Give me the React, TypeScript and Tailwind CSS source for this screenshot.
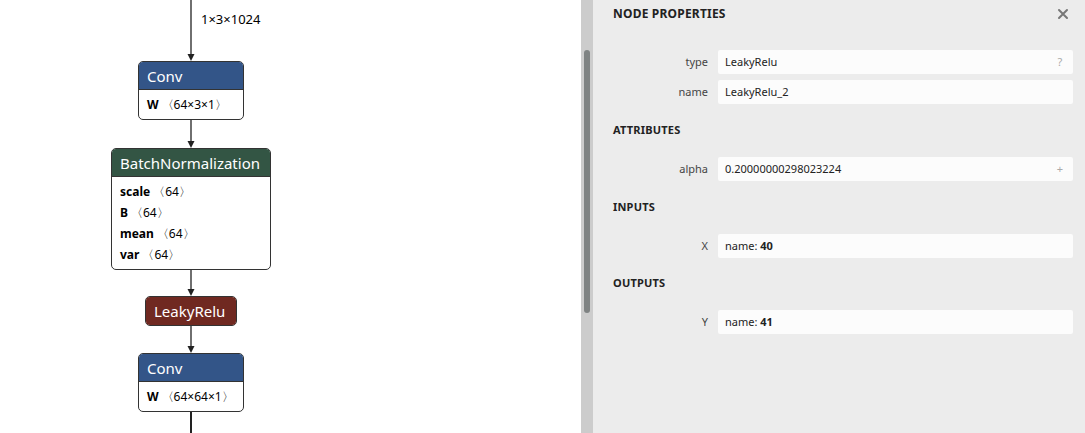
import React from "react";

const font = { fontFamily: '"Noto Sans", "Open Sans", sans-serif' };

function Edge({ h, label }: { h: number; label?: string }) {
  return (
    <div className="relative w-[12px] shrink-0" style={{ height: h }}>
      <svg width="12" height={h} className="block">
        <line x1="6" y1="0" x2="6" y2={h - 4} stroke="#222" strokeWidth="1.3" />
        <polygon points={`2.5,${h - 7} 9.5,${h - 7} 6,${h}`} fill="#222" />
      </svg>
      {label && (
        <span className="absolute left-[16px] top-[10px] text-[13px] text-black whitespace-nowrap">{label}</span>
      )}
    </div>
  );
}

function Attr({ name, shape }: { name: string; shape: string }) {
  return (
    <div className="h-[21px] leading-[21px] text-[12px] text-black whitespace-nowrap">
      <span className="font-bold">{name}</span>
      <span className="ml-[3px]">〈{shape}〉</span>
    </div>
  );
}

function Node({
  title,
  color,
  width,
  attrs,
}: {
  title: string;
  color: string;
  width?: string;
  attrs?: { name: string; shape: string }[];
}) {
  return (
    <div className={`border border-[#333] rounded-[5px] overflow-hidden bg-white shrink-0 ${width ?? ""}`}>
      <div
        className={`${color} h-[28px] leading-[28px] px-[8px] text-[15px] text-white whitespace-nowrap ${attrs ? "border-b border-[#333]" : ""}`}
      >
        {title}
      </div>
      {attrs && (
        <div className="pl-[8px] pt-[4px] pb-[4px]">
          {attrs.map((a) => (
            <Attr key={a.name} name={a.name} shape={a.shape} />
          ))}
        </div>
      )}
    </div>
  );
}

function Row({ label, children, icon }: { label: string; children: React.ReactNode; icon?: string }) {
  return (
    <div className="flex items-center">
      <div className="w-[95px] text-right text-[11px] text-[#444]">{label}</div>
      <div className="ml-[10px] flex-1 h-[24px] bg-[#fcfcfc] rounded-[2px] flex items-center px-[7px] text-[11px] text-[#222]">
        <span className="flex-1 truncate">{children}</span>
        {icon && <span className="text-[#aaa] text-[11px] w-[12px] text-center">{icon}</span>}
      </div>
    </div>
  );
}

function Section({ title }: { title: string }) {
  return <div className="h-[16px] leading-[16px] text-[11px] font-bold text-[#222] tracking-[0.2px]">{title}</div>;
}

export default function App() {
  return (
    <div className="flex h-[433px] w-[1085px] overflow-hidden bg-white" style={font}>
      <div className="w-[581px] shrink-0 bg-white">
        <div className="w-[382px] flex flex-col items-center">
          <Edge h={61} label="1×3×1024" />
          <Node title="Conv" color="bg-[#335588]" width="w-[106px]" attrs={[{ name: "W", shape: "64×3×1" }]} />
          <Edge h={28} />
          <Node
            title="BatchNormalization"
            color="bg-[#335544]"
            width="w-[160px]"
            attrs={[
              { name: "scale", shape: "64" },
              { name: "B", shape: "64" },
              { name: "mean", shape: "64" },
              { name: "var", shape: "64" },
            ]}
          />
          <Edge h={26} />
          <Node title="LeakyRelu" color="bg-[#702921]" width="w-[92px]" />
          <Edge h={27} />
          <Node title="Conv" color="bg-[#335588]" width="w-[106px]" attrs={[{ name: "W", shape: "64×64×1" }]} />
          <div className="w-[1.3px] h-[30px] bg-[#222]" />
        </div>
      </div>
      <div className="w-[12px] shrink-0 bg-[#cccccc] pt-[50px]">
        <div className="mx-auto w-[6px] h-[263px] rounded-[3px] bg-[#7f8383]" />
      </div>
      <div className="flex-1 bg-[#ececec] pl-[20px] pr-[12px]">
        <div className="flex items-center h-[16px] mt-[6px]">
          <div className="flex-1 text-[12px] font-bold text-[#222] tracking-[0.2px]">NODE PROPERTIES</div>
          <svg width="12" height="12" viewBox="0 0 12 12" className="mr-[4px]">
            <path d="M2 2 L10 10 M10 2 L2 10" stroke="#777" strokeWidth="2" strokeLinecap="round" />
          </svg>
        </div>
        <div className="mt-[28px] flex flex-col gap-[6px]">
          <Row label="type" icon="?">LeakyRelu</Row>
          <Row label="name">LeakyRelu_2</Row>
        </div>
        <div className="mt-[18px]">
          <Section title="ATTRIBUTES" />
        </div>
        <div className="mt-[19px]">
          <Row label="alpha" icon="+">0.20000000298023224</Row>
        </div>
        <div className="mt-[18px]">
          <Section title="INPUTS" />
        </div>
        <div className="mt-[19px]">
          <Row label="X">
            name: <b>40</b>
          </Row>
        </div>
        <div className="mt-[17px]">
          <Section title="OUTPUTS" />
        </div>
        <div className="mt-[19px]">
          <Row label="Y">
            name: <b>41</b>
          </Row>
        </div>
      </div>
    </div>
  );
}
